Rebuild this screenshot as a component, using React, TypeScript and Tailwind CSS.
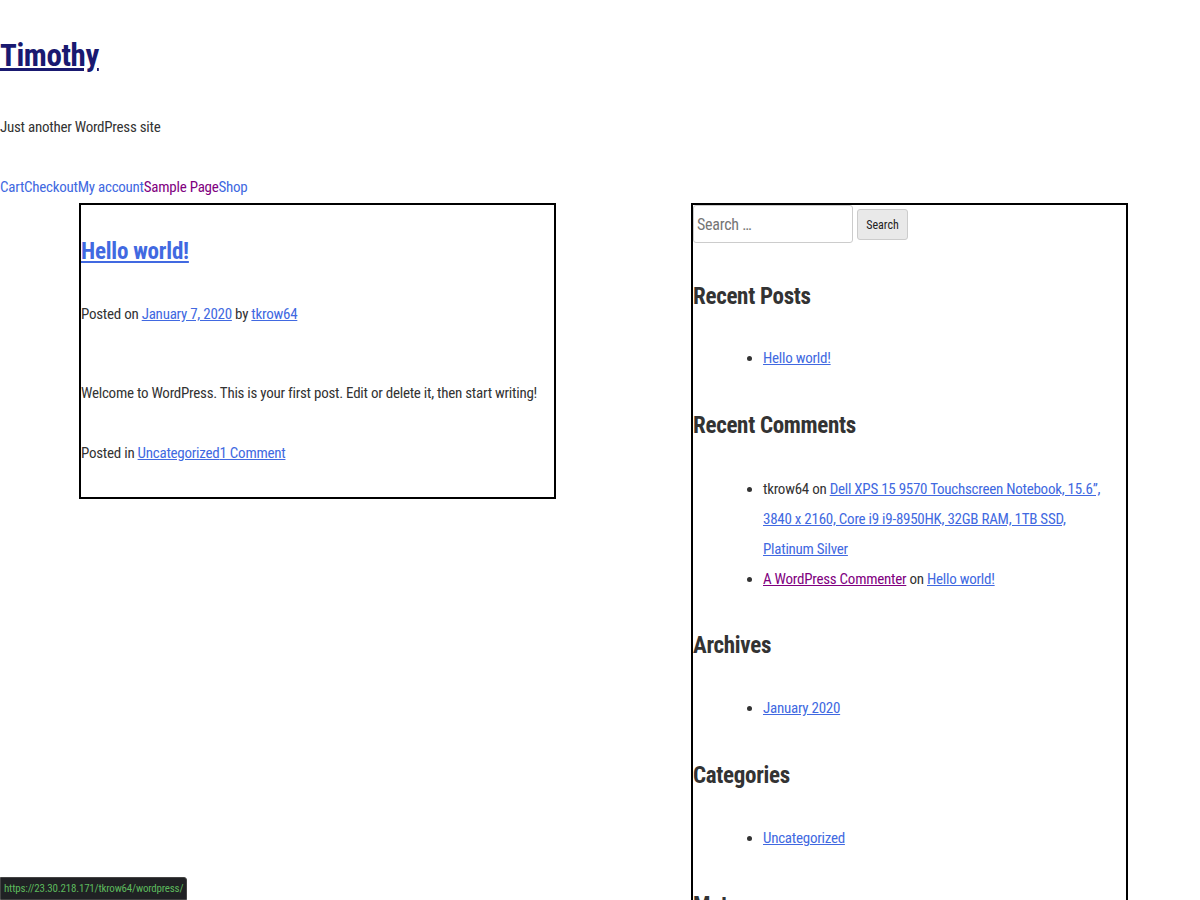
const font = "font-['Roboto_Condensed','Liberation_Sans',sans-serif]";

function Bullet({ children }: { children: React.ReactNode }) {
  return <li className="list-disc leading-[30px]">{children}</li>;
}

function WidgetTitle({ children, className = '' }: { children: React.ReactNode; className?: string }) {
  return (
    <h2 className={`text-[23px] font-bold leading-[32px] tracking-[-0.3px] text-[#333] ${className}`}>
      {children}
    </h2>
  );
}

function App() {
  const link = 'text-[#4169e1] underline';
  const visited = 'text-[#800080] underline';
  return (
    <div className={`${font} min-h-[900px] bg-white text-[15px] tracking-[-0.25px] text-[#333]`}>
      {/* header */}
      <header>
        <h1 className="pt-[36px] text-[31px] font-bold leading-[40px] tracking-[-0.4px]">
          <a href="#" className="text-[#191970] underline">Timothy</a>
        </h1>
        <p className="mt-[39px] leading-[24px]">Just another WordPress site</p>
        <nav className="mt-[36px] flex leading-[24px]">
          <a href="#" className="text-[#4169e1]">Cart</a>
          <a href="#" className="text-[#4169e1]">Checkout</a>
          <a href="#" className="text-[#4169e1]">My account</a>
          <a href="#" className="text-[#800080]">Sample Page</a>
          <a href="#" className="text-[#4169e1]">Shop</a>
        </nav>
      </header>

      <div className="mt-[4px] flex items-start">
        {/* post */}
        <main className="ml-[79px] w-[477px] border-2 border-black pb-[32px] pt-[31px]">
          <h2 className="text-[23px] font-bold leading-[32px] tracking-[-0.2px]">
            <a href="#" className={link}>Hello world!</a>
          </h2>
          <p className="mt-[34px] leading-[24px]">
            Posted on <a href="#" className={link}>January 7, 2020</a> by{' '}
            <a href="#" className={link}>tkrow64</a>
          </p>
          <p className="mt-[55px] leading-[24px]">
            Welcome to WordPress. This is your first post. Edit or delete it, then start writing!
          </p>
          <p className="mt-[36px] leading-[24px]">
            Posted in <a href="#" className={link}>Uncategorized</a>
            <a href="#" className={link}>1 Comment</a>
          </p>
        </main>

        {/* sidebar */}
        <aside className="ml-[135px] h-[720px] w-[437px] border-2 border-black">
          <form className="flex items-start">
            <input
              placeholder="Search …"
              className="h-[38px] w-[160px] rounded-[3px] border border-[#ccc] px-[3px] text-[16px] text-[#333] placeholder:text-[#757575]"
            />
            <button
              type="button"
              className="ml-[4px] mt-[4px] h-[31px] w-[51px] rounded-[3px] border border-[#ccc] bg-[#e9e9e9] text-[12px] tracking-normal text-[#222]"
            >
              Search
            </button>
          </form>

          <WidgetTitle className="mt-[38px]">Recent Posts</WidgetTitle>
          <ul className="mt-[30px] pl-[70px]">
            <Bullet><a href="#" className={link}>Hello world!</a></Bullet>
          </ul>

          <WidgetTitle className="mt-[37px]">Recent Comments</WidgetTitle>
          <ul className="mt-[32px] pl-[70px] pr-[10px]">
            <Bullet>
              tkrow64 on{' '}
              <a href="#" className={link}>
                Dell XPS 15 9570 Touchscreen Notebook, 15.6”, 3840 x 2160, Core i9 i9-8950HK, 32GB RAM, 1TB SSD, Platinum Silver
              </a>
            </Bullet>
            <Bullet>
              <a href="#" className={visited}>A WordPress Commenter</a> on{' '}
              <a href="#" className={link}>Hello world!</a>
            </Bullet>
          </ul>

          <WidgetTitle className="mt-[36px]">Archives</WidgetTitle>
          <ul className="mt-[31px] pl-[70px]">
            <Bullet><a href="#" className={link}>January 2020</a></Bullet>
          </ul>

          <WidgetTitle className="mt-[37px]">Categories</WidgetTitle>
          <ul className="mt-[31px] pl-[70px]">
            <Bullet><a href="#" className={link}>Uncategorized</a></Bullet>
          </ul>

          <WidgetTitle className="mt-[37px]">Meta</WidgetTitle>
        </aside>
      </div>

      {/* link preview */}
      <div className="fixed bottom-0 left-0 rounded-tr-[3px] border border-[#444] bg-[#202124] px-[3px] text-[11px] leading-[21px] tracking-[-0.2px] text-[#5cb85c]">
        https://23.30.218.171/tkrow64/wordpress/
      </div>
    </div>
  );
}

export default App;
